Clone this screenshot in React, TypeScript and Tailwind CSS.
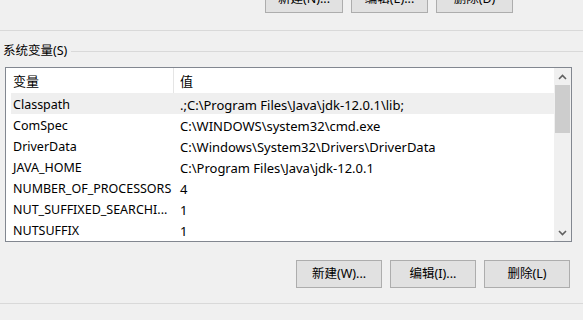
import React from 'react';

const rows = [
  { name: 'Classpath', value: '.;C:\\Program Files\\Java\\jdk-12.0.1\\lib;' },
  { name: 'ComSpec', value: 'C:\\WINDOWS\\system32\\cmd.exe' },
  { name: 'DriverData', value: 'C:\\Windows\\System32\\Drivers\\DriverData' },
  { name: 'JAVA_HOME', value: 'C:\\Program Files\\Java\\jdk-12.0.1' },
  { name: 'NUMBER_OF_PROCESSORS', value: '4' },
  { name: 'NUT_SUFFIXED_SEARCHI...', value: '1' },
  { name: 'NUTSUFFIX', value: '1' },
];

function WinButton({ label, className = '' }: { label: string; className?: string }) {
  return (
    <button
      className={`h-[28px] bg-[#e1e1e1] border border-[#adadad] text-[12.5px] text-black flex items-center justify-center ${className}`}
    >
      {label}
    </button>
  );
}

export default function App() {
  return (
    <div
      className="w-[583px] h-[320px] bg-[#f0f0f0] overflow-hidden flex flex-col text-black"
      style={{ fontFamily: '"Noto Sans", "Noto Sans CJK SC", sans-serif' }}
    >
      {/* buttons of the user variables group, cut off at the top */}
      <div className="flex mt-[-15px] pl-[265px] gap-[8px]">
        <WinButton label="新建(N)..." className="w-[78px]" />
        <WinButton label="编辑(E)..." className="w-[77px]" />
        <WinButton label="删除(D)" className="w-[77px]" />
      </div>

      <div className="mt-[17px] border-t border-[#d9d9d9]" />

      {/* group title */}
      <div className="flex items-center h-[18px] mt-[11px]">
        <span className="pl-[3px] pr-[4px] text-[12.5px] leading-none">系统变量(S)</span>
        <div className="flex-1 border-t border-[#d9d9d9]" />
      </div>

      {/* list */}
      <div className="ml-[5px] mt-[7px] w-[567px] h-[175px] border border-[#828790] bg-white flex">
        <div className="flex-1 flex flex-col text-[13px]">
          <div className="h-[25px] flex items-center">
            <div className="w-[168px] pl-[7px] pt-[2px] h-full flex items-center border-r border-[#e5e5e5]">变量</div>
            <div className="pl-[6px] pt-[2px]">值</div>
          </div>
          {rows.map((r, i) => (
            <div
              key={r.name}
              className={`h-[21px] flex items-center pt-[4px] ml-[5px] ${i === 0 ? 'bg-[#efefef]' : ''}`}
            >
              <div className="w-[169px] pl-[2px] text-[12.5px] whitespace-nowrap overflow-hidden">{r.name}</div>
              <div className="whitespace-nowrap">{r.value}</div>
            </div>
          ))}
        </div>
        {/* scrollbar */}
        <div className="w-[17px] bg-[#f0f0f0] flex flex-col">
          <div className="h-[17px] flex items-center justify-center">
            <svg width="9" height="6" viewBox="0 0 9 6">
              <path d="M1 5 L4.5 1.5 L8 5" fill="none" stroke="#606060" strokeWidth="1.6" />
            </svg>
          </div>
          <div className="mx-[1px] h-[48px] bg-[#cdcdcd]" />
          <div className="flex-1" />
          <div className="h-[17px] flex items-center justify-center">
            <svg width="9" height="6" viewBox="0 0 9 6">
              <path d="M1 1 L4.5 4.5 L8 1" fill="none" stroke="#606060" strokeWidth="1.6" />
            </svg>
          </div>
        </div>
      </div>

      {/* buttons */}
      <div className="flex mt-[18px] pl-[296px] gap-[8px]">
        <WinButton label="新建(W)..." className="w-[86px]" />
        <WinButton label="编辑(I)..." className="w-[86px]" />
        <WinButton label="删除(L)" className="w-[86px]" />
      </div>

      <div className="mt-[15px] border-t border-[#d9d9d9]" />
    </div>
  );
}
